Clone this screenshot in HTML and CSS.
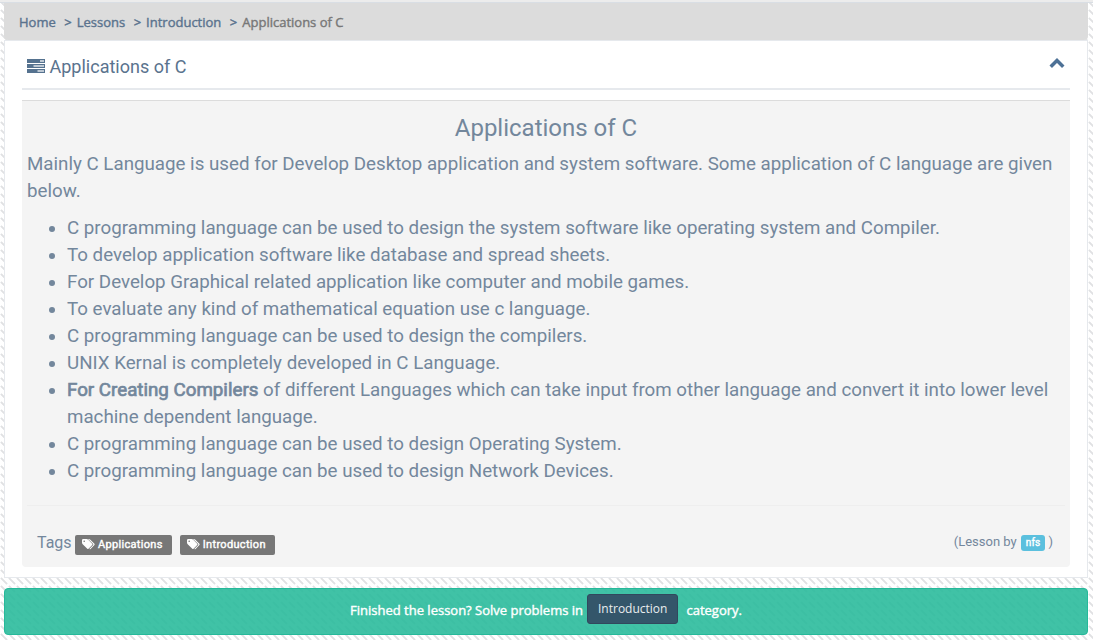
FILE: index.html
```html
<!DOCTYPE html>
<html lang="en">
<head>
<meta charset="utf-8">
<title>Applications of C</title>
<link rel="stylesheet" href="styles.css">
</head>
<body>
<div class="topline"></div>
<main class="page">
  <nav class="breadcrumb"><a>Home</a><i>&gt;</i><a>Lessons</a><i>&gt;</i><a>Introduction</a><i>&gt;</i><span>Applications of C</span></nav>
  <section class="panel">
    <header class="panel-title">
      <svg class="server" viewBox="0 0 18 14"><path d="M0 0h18v4H0zM0 5h18v4H0zM0 10h18v4H0z" fill="#55728f"/><path d="M13 1.200h4v1.500h-4zM6.500 6.300H17v1.500H6.500zM10.500 11.300H17v1.500h-6.500z" fill="#dfe5ea"/></svg>
      <h2>Applications of C</h2>
      <svg class="chevron" viewBox="0 0 14 10"><path d="M1.300 8 7 2.300 12.700 8" fill="none" stroke="#4d7196" stroke-width="3.200"/></svg>
    </header>
    <article class="lesson">
      <h3>Applications of C</h3>
      <p>Mainly C Language is used for Develop Desktop application and system software. Some application of C language are given below.</p>
      <ul>
        <li>C programming language can be used to design the system software like operating system and Compiler.</li>
        <li>To develop application software like database and spread sheets.</li>
        <li>For Develop Graphical related application like computer and mobile games.</li>
        <li>To evaluate any kind of mathematical equation use c language.</li>
        <li>C programming language can be used to design the compilers.</li>
        <li>UNIX Kernal is completely developed in C Language.</li>
        <li><b>For Creating Compilers</b> of different Languages which can take input from other language and convert it into lower level machine dependent language.</li>
        <li>C programming language can be used to design Operating System.</li>
        <li>C programming language can be used to design Network Devices.</li>
      </ul>
      <footer class="meta">
        <span class="tags">Tags</span>
        <a class="tag"><svg viewBox="0 0 13 11"><path d="M0 1.200Q0 0 1.200 0h3.300q.9 0 1.500.6l4.200 4.200q.6.600 0 1.200L6.500 9.800q-.6.600-1.200 0L.7 5.200Q0 4.500 0 3.700zM6 0h.6q.8 0 1.500.6l4.300 4.200q.6.600 0 1.200L8.600 9.900q-.6.600-1.300.2l3.700-3.900q.7-.8 0-1.500z" fill="#fff"/><circle cx="2.200" cy="2.200" r=".8" fill="#777"/></svg><span>Applications</span></a>
        <a class="tag"><svg viewBox="0 0 13 11"><path d="M0 1.200Q0 0 1.200 0h3.300q.9 0 1.500.6l4.200 4.200q.6.600 0 1.200L6.500 9.800q-.6.600-1.200 0L.7 5.200Q0 4.500 0 3.700zM6 0h.6q.8 0 1.500.6l4.300 4.200q.6.600 0 1.200L8.600 9.900q-.6.600-1.300.2l3.700-3.900q.7-.8 0-1.500z" fill="#fff"/><circle cx="2.200" cy="2.200" r=".8" fill="#777"/></svg><span>Introduction</span></a>
        <div class="author"><span>(Lesson by</span><a>nfs</a><span>)</span></div>
      </footer>
    </article>
  </section>
  <div class="finish"><span>Finished the lesson? Solve problems in</span><a>Introduction</a><span>category.</span></div>
</main>
</body>
</html>
```
FILE: styles.css
```css
* { box-sizing: border-box; }
body {
  margin: 0;
  height: 640px;
  overflow: hidden;
  color: #73879c;
  font-family: Roboto, "Liberation Sans", sans-serif;
  background: linear-gradient(135deg, #fff 10%, transparent 14% 86%, #fff 90%),
    linear-gradient(45deg, #fff 39%, #e0e1e3 45% 55%, #fff 61%);
  background-size: 8px 8px;
  background-position: 0 1px;
}
h2, h3, p, ul { margin: 0; font-weight: 400; }
svg { display: block; flex: none; }
.topline { height: 3px; background: #ececec; border-bottom: 1px solid #d9dee4; }
.page { margin: 0 5px 0 4px; }
.breadcrumb {
  display: flex;
  align-items: center;
  height: 37px;
  padding: 0 15px 0 15px;
  border-radius: 0 0 4px 4px;
  background: #dcdcdc;
  color: #777;
  font: 13px/18px "Open Sans", sans-serif;
  -webkit-text-stroke: 0.4px;
}
.breadcrumb a { color: #5a738e; }
.breadcrumb i { color: #5a738e; font-style: normal; margin: 0 5px 0 8.5px; }
.panel {
  height: 538px;
  padding: 0 17px;
  background: #fff;
  border: 1px solid #e6e9ed;
}
.panel-title {
  display: flex;
  align-items: center;
  height: 49px;
  padding: 0 5px;
  border-bottom: 2px solid #e6e9ed;
}
.server { width: 18px; height: 14px; margin-top: 2px; }
h2 { margin: 5px 0 0 4.5px; color: #5a738e; font-size: 18px; line-height: 20px; }
.chevron { width: 16px; height: 11px; margin: 0 0 3px auto; }
.lesson {
  height: 467px;
  margin-top: 10px;
  padding: 10px 5px 0;
  background: #f4f4f4;
  border-top: 1px solid #dcdcdc;
  border-radius: 0 0 4px 4px;
  font-size: 18.74px;
  line-height: 27px;
}
h3 { height: 40px; text-align: center; font-size: 24px; line-height: 34px; }
ul { padding-left: 40px; margin-top: 10px; }
b { font-weight: 400; -webkit-text-stroke: 0.7px; }
.meta {
  display: flex;
  align-items: center;
  height: 61px;
  margin-top: 20px;
  padding: 14px 12px 0 10px;
  border-top: 1px solid #eee;
}
.tags { width: 34px; font-size: 16px; margin-right: 4px; line-height: 20px; }
.tag {
  display: flex;
  align-items: center;
  height: 20px;
  margin: 4px 8px 0 0;
  padding: 0 9px 1px 7px;
  border-radius: 2px;
  background: #777;
  color: #fff;
  font-size: 11px;
  line-height: 15px;
  letter-spacing: 0.32px;
  -webkit-text-stroke: 0.4px;
}
.tag svg { width: 13px; height: 11px; margin-right: 3px; }
.author { display: flex; margin: -2px 0 0 auto; font-size: 13px; line-height: 18px; }
.author a {
  height: 16px;
  margin: 2px 3px 0 4px;
  padding: 0 5px;
  border-radius: 3px;
  background: #5bc0de;
  color: #fff;
  font-size: 10px;
  line-height: 15px;
  letter-spacing: 0.2px;
  -webkit-text-stroke: 0.4px;
}
.finish {
  display: flex;
  justify-content: center;
  height: 47px;
  margin-top: 10px;
  padding-top: 5px;
  border: 1px solid #26b99a;
  border-radius: 4px;
  background: rgba(38, 185, 154, 0.88);
  color: #fff;
  font: 13px/32px "Open Sans", sans-serif;
  -webkit-text-stroke: 0.4px;
}
.finish a {
  height: 30px;
  margin: 0 8px 0 4px;
  padding: 0 10px;
  border: 1px solid #31485d;
  border-radius: 3px;
  background: #34566a;
  color: #e9edef;
  font-size: 12px;
  line-height: 27px;
  -webkit-text-stroke: 0;
}
```
